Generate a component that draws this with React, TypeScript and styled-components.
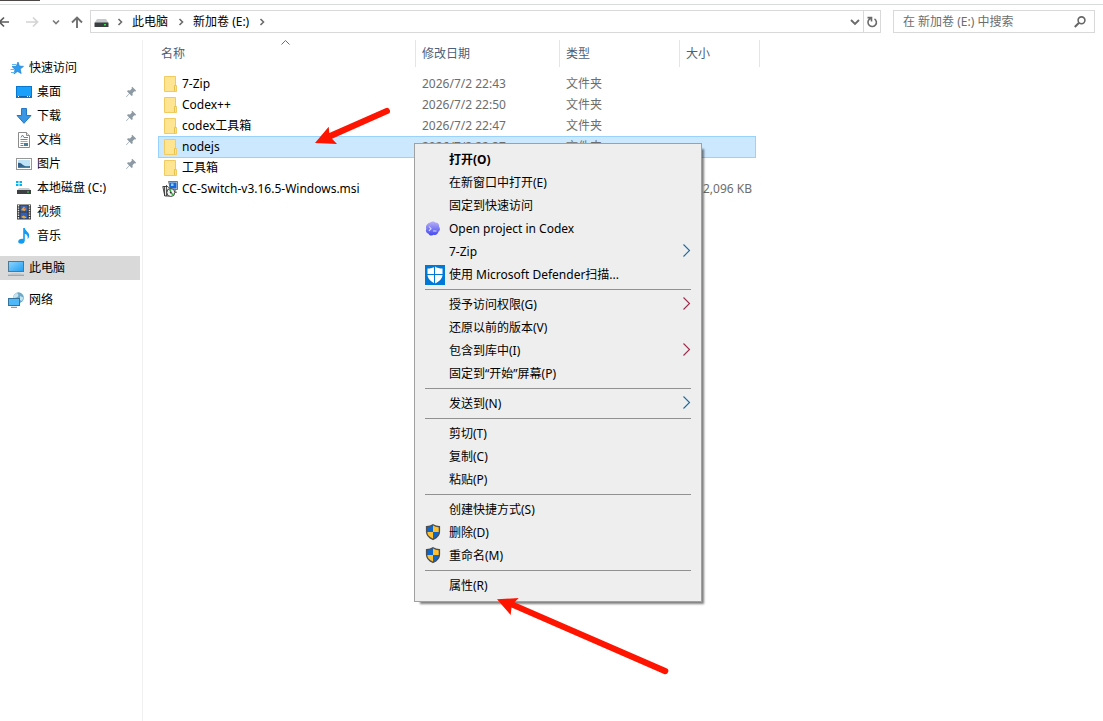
import React from "react";
import styled, { createGlobalStyle, css } from "styled-components";

const GlobalStyle = createGlobalStyle`
  *, *::before, *::after { box-sizing: border-box; }
  body {
    margin: 0;
    background: #fff;
    color: #000;
    font: 12px/16px "Noto Sans", "Noto Sans CJK SC", sans-serif;
  }
  button, input { font: inherit; color: inherit; }
`;

const Page = styled.div`
  position: relative;
  min-height: 100vh;
  display: flex;
  flex-direction: column;
  overflow: hidden;
`;

const TabEdge = styled.div`
  height: 5px;
  border-bottom: 1px solid #dadbdc;
  &::before {
    content: "";
    display: block;
    width: 40px;
    height: 1px;
    background: #4d4848;
  }
`;

const Toolbar = styled.header`
  display: flex;
  align-items: center;
  height: 35px;
  padding: 0 8px 2px 0;
`;

const plainButton = css`
  display: flex;
  align-items: center;
  justify-content: center;
  border: 0;
  padding: 0;
  background: none;
`;

const NavButton = styled.button<{ $width: number; $start?: boolean }>`
  ${plainButton}
  width: ${(p) => p.$width}px;
  height: 22px;
  flex: none;
  ${(p) => p.$start && "justify-content: flex-start;"}
`;

const AddressBar = styled.div`
  display: flex;
  align-items: center;
  flex: 1;
  height: 23px;
  margin: 0 12px 0 2px;
  border: 1px solid #d9d9d9;
`;

const DriveSlot = styled.span`
  display: flex;
  width: 23px;
  padding: 4px 0 0 3px;
`;

const Crumbs = styled.nav`
  display: flex;
  align-items: center;
  flex: 1;
`;

const Crumb = styled.a`
  color: #000;
  text-decoration: none;
  white-space: nowrap;
`;

const CrumbArrow = styled.span`
  display: flex;
  justify-content: center;
  width: 12px;
  margin: 0 6px 0 0;
  ${Crumb} + & { margin: 0 6px 0 7px; }
`;

const RefreshButton = styled.button`
  ${plainButton}
  width: 17px;
  height: 21px;
  border-left: 1px solid #d9d9d9;
`;

const SearchBox = styled.label`
  display: flex;
  align-items: center;
  width: 202px;
  height: 23px;
  padding: 0 8px 0 9px;
  border: 1px solid #d9d9d9;
`;

const SearchInput = styled.input`
  flex: 1;
  min-width: 0;
  border: 0;
  padding: 0;
  outline: 0;
  background: none;
  &::placeholder { color: #6d6d6d; opacity: 1; }
`;

const Body = styled.div`
  display: flex;
  flex: 1;
`;

const Sidebar = styled.nav`
  width: 143px;
  flex: none;
  padding-top: 16px;
  border-right: 1px solid #f0f0f0;
`;

const SideGroup = styled.ul`
  list-style: none;
  margin: 0 2px 8px 0;
  padding: 0;
`;

const SideLink = styled.a<{ $nested?: boolean; $current?: boolean }>`
  display: flex;
  align-items: center;
  gap: 5px;
  height: 24px;
  padding-left: ${(p) => (p.$nested ? 16 : 8)}px;
  padding-right: 3px;
  color: #000;
  text-decoration: none;
  background: ${(p) => (p.$current ? "#d9d9d9" : "transparent")};
  svg { flex: none; }
  span { flex: 1; white-space: nowrap; }
`;

const Main = styled.main`
  flex: 1;
  min-width: 0;
  padding-left: 15px;
`;

const Table = styled.table`
  display: block;
  border-spacing: 0;
`;

const rowGrid = css`
  display: grid;
  grid-template-columns: 258px 144px 120px 80px;
`;

const HeadRow = styled.tr`
  ${rowGrid}
  margin-bottom: 6px;
`;

const HeadCell = styled.th<{ $first?: boolean }>`
  position: relative;
  display: flex;
  align-items: center;
  height: 27px;
  padding: 0 0 0 ${(p) => (p.$first ? 3 : 6)}px;
  border-right: 1px solid #e5e5e5;
  color: #4c607a;
  font-weight: 400;
`;

const SortMark = styled.svg`
  position: absolute;
  top: 0;
  left: 50%;
  margin-left: -6px;
`;

const FileRow = styled.tr<{ $selected?: boolean }>`
  ${rowGrid}
  width: 598px;
  height: 22px;
  margin-bottom: -1px;
  align-items: center;
  ${(p) =>
    p.$selected &&
    css`
      background: #cce8ff;
      box-shadow: inset 0 0 0 1px #99d1ff;
    `}
`;

const FileCell = styled.td`
  padding: 0 0 0 6px;
  color: #6d6d6d;
  white-space: nowrap;
`;

const NameCell = styled(FileCell)`
  display: flex;
  align-items: center;
  gap: 4px;
  padding-left: 4px;
  color: #000;
`;

const SizeCell = styled(FileCell)`
  padding-right: 8px;
  text-align: right;
`;

const Menu = styled.div`
  position: absolute;
  left: 414px;
  top: 143px;
  width: 288px;
  padding: 4px 0;
  background: #eee;
  border: 1px solid #a0a0a0;
  box-shadow: 4px 4px 2px -2px rgba(0, 0, 0, 0.5);
`;

const MenuItem = styled.button<{ $bold?: boolean }>`
  display: flex;
  align-items: center;
  width: 100%;
  height: 23px;
  padding: 0 10px 0 8px;
  border: 0;
  background: none;
  text-align: left;
  white-space: nowrap;
  font-weight: ${(p) => (p.$bold ? 700 : 400)};
`;

const MenuIcon = styled.span`
  display: flex;
  width: 20px;
  margin-right: 4px;
  margin-left: 2px;
`;

const MenuText = styled.span`
  flex: 1;
`;

const MenuLine = styled.hr`
  height: 1px;
  margin: 3px 10px;
  border: 0;
  background: #919191;
`;

const Arrows = styled.svg`
  position: absolute;
  left: 0;
  top: 0;
  pointer-events: none;
`;

type ChevronProps = { dir: "right" | "down"; color?: string };
const Chevron = ({ dir, color = "#6b6b6b" }: ChevronProps) => (
  <svg width="8" height="8" viewBox="0 0 8 8" fill="none" stroke={color} strokeWidth="1.6">
    <path d={dir === "right" ? "M2.500 1l3 3-3 3" : "M1 2.500l3 3 3-3"} />
  </svg>
);

const SubmenuMark = ({ color }: { color: string }) => (
  <svg width="9" height="15" viewBox="0 0 9 15" fill="none" stroke={color} strokeWidth="1.1">
    <path d="M1.500 .5L7.500 6.500l-6 6" />
  </svg>
);

const PinIcon = () => (
  <svg width="11" height="12" viewBox="0 0 11 12">
    <path d="M6.200 .8l4 4-1 .6-.8-.2-1.900 2 .2 2-1 .9-2.300-2.300L.6 11l-.5-.4 3-3.200L1 5.200l1-1 2 .2 1.900-1.900-.3-.9z" fill="#8d99a3" />
  </svg>
);

const StarIcon = () => (
  <svg width="16" height="16" viewBox="0 0 16 16">
    <path d="M10 2l1.400 4 4.100.4-3.300 2.700 1 4.500-3.700-2.200L6 14l1-4.600-3-2.800 4.100-.3z" fill="#2e9cf0" stroke="#1478c8" strokeWidth=".6" />
    <path d="M4 4.500h4M2.500 9.500h4M3 12.500h4" stroke="#5bb8f5" />
  </svg>
);

const DesktopIcon = () => (
  <svg width="16" height="16" viewBox="0 0 16 16">
    <rect x=".5" y="2.500" width="15" height="11" fill="#18a0fb" stroke="#0877cf" />
    <path d="M1 12.500h14" stroke="#0b65b0" />
    <path d="M2 12.500h1M11 12.500h1M13 12.500h1" stroke="#fff" />
  </svg>
);

const DownloadIcon = () => (
  <svg width="16" height="16" viewBox="0 0 16 16">
    <path d="M5.500 .5h5v7h4.500L8 15.300 1 7.500h4.500z" fill="#3b96e4" stroke="#2678c6" />
  </svg>
);

const DocumentIcon = () => (
  <svg width="16" height="16" viewBox="0 0 16 16">
    <path d="M2.500 .5h8l3 3v12h-11z" fill="#fff" stroke="#8b8b8b" />
    <path d="M10.500 .5v3h3" fill="#e8e8e8" stroke="#8b8b8b" />
    <path d="M5 5.500l1.500-2.500L8 5.500h4M4.500 7.500h7M4.500 11.500h3M4.500 13.500h3" fill="none" stroke="#3392dd" />
    <path d="M4.500 9.500h7" stroke="#9ab" />
    <rect x="8" y="11" width="4" height="3" fill="#4a7f9c" />
  </svg>
);

const PictureIcon = () => (
  <svg width="16" height="16" viewBox="0 0 16 16">
    <rect x=".5" y="2.500" width="15" height="11" fill="#fff" stroke="#979797" />
    <rect x="2" y="4" width="12" height="8" fill="#bfe2f7" />
    <path d="M2 7c2-.5 3 .5 5 2s4 1.500 7 1v2H2z" fill="#34608d" />
    <path d="M2 11c4-.5 8 0 12-.5V12H2z" fill="#3d8b9a" />
  </svg>
);

const LocalDiskIcon = () => (
  <svg width="16" height="16" viewBox="0 0 16 16">
    <path d="M0 1h2.500v2H0zM3.500 1H6v2H3.500zM0 4h2.500v2H0zM3.500 4H6v2H3.500z" fill="#00b4f0" />
    <path d="M3 8h10l2 2.500H1z" fill="#c9ccce" />
    <rect x="1" y="10" width="14" height="4" fill="#3c4043" />
    <rect x="11" y="11.500" width="2" height="1" fill="#3fe04b" />
  </svg>
);

const VideoIcon = () => (
  <svg width="16" height="16" viewBox="0 0 16 16">
    <rect x="1" y=".5" width="14" height="15" fill="#393939" />
    <path d="M2.500 1v14M13.500 1v14" stroke="#e8e8e8" strokeWidth="1.400" strokeDasharray="1.400 1" />
    <rect x="4.500" y="1.500" width="7" height="6" fill="#3564b8" />
    <rect x="4.500" y="8.500" width="7" height="6" fill="#2f5fc0" />
    <path d="M5 6l3-3.500L10.500 5l-2 2zM5 13l2.500-1.500L11 13.500l-3 1z" fill="#e6a93a" />
    <path d="M8 3.500l2 1-1 1.500z" fill="#c9463b" />
  </svg>
);

const MusicIcon = () => (
  <svg width="16" height="16" viewBox="0 0 16 16">
    <path d="M7.200 0h1.600c.3 3 4.800 4 4.400 8-.2 1.500-.9 2.500-1.700 3 .8-2.500-.2-4.500-2.700-5.200V12.500c0 2-1.700 3.300-3.500 3.300S2.200 14.800 2.200 13.500c0-1.800 2.500-3.200 5-2.600z" fill="#119bf2" />
  </svg>
);

const ComputerIcon = () => (
  <svg width="16" height="16" viewBox="0 0 16 16">
    <defs>
      <linearGradient id="screen" x1="0" y1="0" x2="1" y2="1">
        <stop offset="0" stopColor="#8fd6ff" />
        <stop offset="1" stopColor="#1f9df0" />
      </linearGradient>
    </defs>
    <rect x=".5" y="1.500" width="15" height="10" fill="url(#screen)" stroke="#4c7a96" />
    <path d="M0 15.200h16" stroke="#7d95a5" />
    <path d="M3 13.500h10" stroke="#c4cdd4" />
  </svg>
);

const NetworkIcon = () => (
  <svg width="16" height="16" viewBox="0 0 16 16">
    <circle cx="10.500" cy="5.700" r="5.400" fill="#6fa9c9" />
    <path d="M8 1c2 0 3 2 2 3.500S6.500 6 5.500 6 6 2 8 1zM12 4l3.500 1.500L14 9l-2-1z" fill="#c3e3ee" />
    <rect x=".5" y="6.500" width="11" height="7" fill="#4fb8f8" stroke="#34739c" />
    <path d="M3 15.300h6" stroke="#6d8697" />
  </svg>
);

const DriveIcon = () => (
  <svg width="15" height="9" viewBox="0 0 15 9">
    <path d="M3 0h9l2.500 4H.5z" fill="#c5c8ca" />
    <rect x=".5" y="3.500" width="14" height="4.500" rx=".5" fill="#3b3f42" />
    <rect x="10" y="5" width="2" height="1.500" fill="#3ce04c" />
  </svg>
);

const FolderIcon = () => (
  <svg width="16" height="16" viewBox="0 0 16 16">
    <path d="M2.500 .5h11v9h1v6h-12z" fill="#ffe591" stroke="#efcb62" />
    <path d="M12.500 15V9.500h1.500" fill="none" stroke="#e9c14e" />
  </svg>
);

const InstallerIcon = () => (
  <svg width="16" height="16" viewBox="0 0 16 16">
    <path d="M6.500 .5h9v8h-3l2 3h-5z" fill="#d7d7d7" stroke="#555" strokeWidth=".8" />
    <rect x="7.500" y="1.500" width="7" height="6" fill="#1667d9" />
    <path d="M9 2.500h2.500v2.500H9z" fill="#8fd0ff" />
    <path d="M.8 5.500h5l2 2v7.500h-5z" fill="#e6e6e6" stroke="#333" strokeWidth=".9" />
    <path d="M2.500 5.500V15M4.500 4v11" stroke="#333" strokeWidth=".8" />
    <circle cx="8.800" cy="11.500" r="4" fill="#eef3ee" stroke="#333" strokeWidth=".9" />
    <path d="M8.800 11.500L6.500 8.500a3.700 3.700 0 0 1 3-.7zM8.800 11.500l3.400 1.500a3.700 3.700 0 0 1-2 2z" fill="#38b34a" />
    <circle cx="8.800" cy="11.500" r="1" fill="#333" />
  </svg>
);

const CodexIcon = () => (
  <svg width="16" height="16" viewBox="0 0 16 16">
    <defs>
      <linearGradient id="codex" x1="0" y1="0" x2="0" y2="1">
        <stop offset="0" stopColor="#b9b0f8" />
        <stop offset="1" stopColor="#4148f0" />
      </linearGradient>
    </defs>
    <path d="M5 1.500C7-.2 9.500.5 10.500 1.500c2.500 0 4 2 3.500 4 1.500 1.800 1.200 4.300-.6 5.300-.4 2.500-2.600 3.700-4.700 3-1.800 1.400-4.400.8-5.200-1.100C1.200 12 .2 9.800 1.300 8 .2 5.500 1.700 2.600 5 1.500z" fill="url(#codex)" />
    <path d="M4 5.500l2 2.200-2 2.200M8 10h3.500" fill="none" stroke="#d5d8ff" strokeWidth="1.100" />
  </svg>
);

const DefenderIcon = () => (
  <svg width="20" height="20" viewBox="0 0 20 20">
    <rect width="20" height="20" fill="#0078d7" />
    <path d="M10 1.500c2 1.400 4.500 2 7.500 2v6c0 4-3 7-7.500 9-4.500-2-7.500-5-7.500-9v-6c3 0 5.500-.6 7.500-2z" fill="#fff" />
    <path d="M9.500 1v18M2 9.500h16" stroke="#0078d7" />
  </svg>
);

const ShieldIcon = () => (
  <svg width="16" height="17" viewBox="0 0 16 17">
    <path d="M8 .8c1.800 1.300 4 1.900 6.400 1.900v5c0 3.600-2.600 6-6.400 7.700C4.200 13.700 1.600 11.300 1.600 7.700v-5C4 2.700 6.200 2.100 8 .8z" fill="#ffc12f" />
    <path d="M8 .8V8H1.600V2.700C4 2.700 6.200 2.100 8 .8zM8 8h6.400c-.1 3.500-2.700 5.800-6.400 7.400z" fill="#0d66c9" />
    <path d="M8 .8c1.800 1.300 4 1.900 6.400 1.900v5c0 3.600-2.600 6-6.400 7.700C4.200 13.700 1.600 11.300 1.600 7.700v-5C4 2.700 6.200 2.100 8 .8z" fill="none" stroke="#4b4f54" strokeWidth="1.400" />
  </svg>
);

const quickAccess = [
  { label: "桌面", icon: <DesktopIcon />, pinned: true },
  { label: "下载", icon: <DownloadIcon />, pinned: true },
  { label: "文档", icon: <DocumentIcon />, pinned: true },
  { label: "图片", icon: <PictureIcon />, pinned: true },
  { label: "本地磁盘 (C:)", icon: <LocalDiskIcon /> },
  { label: "视频", icon: <VideoIcon /> },
  { label: "音乐", icon: <MusicIcon /> },
];

type FileEntry = {
  name: string;
  date?: string;
  type?: string;
  size?: string;
  selected?: boolean;
  installer?: boolean;
};

const files: FileEntry[] = [
  { name: "7-Zip", date: "2026/7/2 22:43", type: "文件夹" },
  { name: "Codex++", date: "2026/7/2 22:50", type: "文件夹" },
  { name: "codex工具箱", date: "2026/7/2 22:47", type: "文件夹" },
  { name: "nodejs", date: "2026/7/2 22:37", type: "文件夹", selected: true },
  { name: "工具箱" },
  { name: "CC-Switch-v3.16.5-Windows.msi", size: "2,096 KB", installer: true },
];

type MenuEntry = {
  label: string;
  icon?: React.ReactNode;
  bold?: boolean;
  submenu?: string;
};

const BLUE = "#1c6a9c";
const RED = "#9c2a4a";

const menuGroups: MenuEntry[][] = [
  [
    { label: "打开(O)", bold: true },
    { label: "在新窗口中打开(E)" },
    { label: "固定到快速访问" },
    { label: "Open project in Codex", icon: <CodexIcon /> },
    { label: "7-Zip", submenu: BLUE },
    { label: "使用 Microsoft Defender扫描...", icon: <DefenderIcon /> },
  ],
  [
    { label: "授予访问权限(G)", submenu: RED },
    { label: "还原以前的版本(V)" },
    { label: "包含到库中(I)", submenu: RED },
    { label: "固定到“开始”屏幕(P)" },
  ],
  [{ label: "发送到(N)", submenu: BLUE }],
  [{ label: "剪切(T)" }, { label: "复制(C)" }, { label: "粘贴(P)" }],
  [
    { label: "创建快捷方式(S)" },
    { label: "删除(D)", icon: <ShieldIcon /> },
    { label: "重命名(M)", icon: <ShieldIcon /> },
  ],
  [{ label: "属性(R)" }],
];

export default function App() {
  return (
    <Page>
      <GlobalStyle />
      <TabEdge />
      <Toolbar>
        <NavButton $width={18} $start aria-label="后退">
          <svg width="10" height="12" viewBox="0 0 10 12" fill="none" stroke="#5c5c5c" strokeWidth="1.700">
            <path d="M9 6H-1M4 1.500L-.5 6 4 10.500" />
          </svg>
        </NavButton>
        <NavButton $width={28} aria-label="前进">
          <svg width="13" height="12" viewBox="0 0 13 12" fill="none" stroke="#d4d4d4" strokeWidth="1.700">
            <path d="M0 6h11.500M7 1.500L11.500 6 7 10.500" />
          </svg>
        </NavButton>
        <NavButton $width={20} aria-label="最近浏览的位置">
          <Chevron dir="down" color="#7a7a7a" />
        </NavButton>
        <NavButton $width={22} aria-label="上移">
          <svg width="12" height="12" viewBox="0 0 12 12" fill="none" stroke="#707070" strokeWidth="1.900">
            <path d="M6 12V1.500M1 6.500l5-5 5 5" />
          </svg>
        </NavButton>
        <AddressBar>
          <DriveSlot><DriveIcon /></DriveSlot>
          <Crumbs aria-label="路径">
            <CrumbArrow><Chevron dir="right" /></CrumbArrow>
            <Crumb href="#pc">此电脑</Crumb>
            <CrumbArrow><Chevron dir="right" /></CrumbArrow>
            <Crumb href="#e">新加卷 (E:)</Crumb>
            <CrumbArrow><Chevron dir="right" /></CrumbArrow>
          </Crumbs>
          <NavButton $width={16} aria-label="历史记录">
            <svg width="10" height="8" viewBox="0 0 10 8" fill="none" stroke="#6b6b6b" strokeWidth="1.900">
              <path d="M1 2l4 4 4-4" />
            </svg>
          </NavButton>
          <RefreshButton aria-label="刷新">
            <svg width="12" height="12" viewBox="0 0 12 12" fill="none" stroke="#6b6b6b" strokeWidth="1.600">
              <path d="M8.500 2.800A4.200 4.200 0 1 1 3 3.600L5 1.800M1.500 1.600h4v4" />
            </svg>
          </RefreshButton>
        </AddressBar>
        <SearchBox>
          <SearchInput type="text" aria-label="搜索" placeholder="在 新加卷 (E:) 中搜索" />
          <svg width="12" height="12" viewBox="0 0 12 12" fill="none" stroke="#666" strokeWidth="1.600">
            <circle cx="7.500" cy="4.300" r="3.400" />
            <path d="M5 6.800L.8 11" strokeWidth="2" />
          </svg>
        </SearchBox>
      </Toolbar>
      <Body>
        <Sidebar aria-label="导航窗格">
          <SideGroup>
            <li>
              <SideLink href="#quick"><StarIcon /><span>快速访问</span></SideLink>
            </li>
            {quickAccess.map((item) => (
              <li key={item.label}>
                <SideLink href="#place" $nested>
                  {item.icon}
                  <span>{item.label}</span>
                  {item.pinned && <PinIcon />}
                </SideLink>
              </li>
            ))}
          </SideGroup>
          <SideGroup>
            <li>
              <SideLink href="#pc" $current><ComputerIcon /><span>此电脑</span></SideLink>
            </li>
          </SideGroup>
          <SideGroup>
            <li>
              <SideLink href="#network"><NetworkIcon /><span>网络</span></SideLink>
            </li>
          </SideGroup>
        </Sidebar>
        <Main>
          <Table>
            <thead>
              <HeadRow>
                <HeadCell $first>
                  名称
                  <SortMark width="9" height="6" viewBox="0 0 9 6" fill="none" stroke="#6b6b6b">
                    <path d="M.5 4.500l4-4 4 4" />
                  </SortMark>
                </HeadCell>
                <HeadCell>修改日期</HeadCell>
                <HeadCell>类型</HeadCell>
                <HeadCell>大小</HeadCell>
              </HeadRow>
            </thead>
            <tbody>
              {files.map((file) => (
                <FileRow key={file.name} $selected={file.selected}>
                  <NameCell>
                    {file.installer ? <InstallerIcon /> : <FolderIcon />}
                    {file.name}
                  </NameCell>
                  <FileCell>{file.date}</FileCell>
                  <FileCell>{file.type}</FileCell>
                  <SizeCell>{file.size}</SizeCell>
                </FileRow>
              ))}
            </tbody>
          </Table>
        </Main>
      </Body>
      <Menu role="menu">
        {menuGroups.map((group, index) => (
          <React.Fragment key={group[0].label}>
            {index > 0 && <MenuLine />}
            {group.map((item) => (
              <MenuItem key={item.label} role="menuitem" $bold={item.bold}>
                <MenuIcon>{item.icon}</MenuIcon>
                <MenuText>{item.label}</MenuText>
                {item.submenu && <SubmenuMark color={item.submenu} />}
              </MenuItem>
            ))}
          </React.Fragment>
        ))}
      </Menu>
      <Arrows width="700" height="700" viewBox="0 0 700 700" fill="#ff1400" aria-hidden="true">
        <path d="M315 143L328.700 126.700 329.300 133 385.500 108.200A3 3 0 0 1 388.200 113.800L332 138.700 337 144z" />
        <path d="M497 599.300L518.700 598 514.500 602.300 666.500 668.300A3 3 0 0 1 664 673.900L511.500 607.500 510.700 615z" />
      </Arrows>
    </Page>
  );
}
